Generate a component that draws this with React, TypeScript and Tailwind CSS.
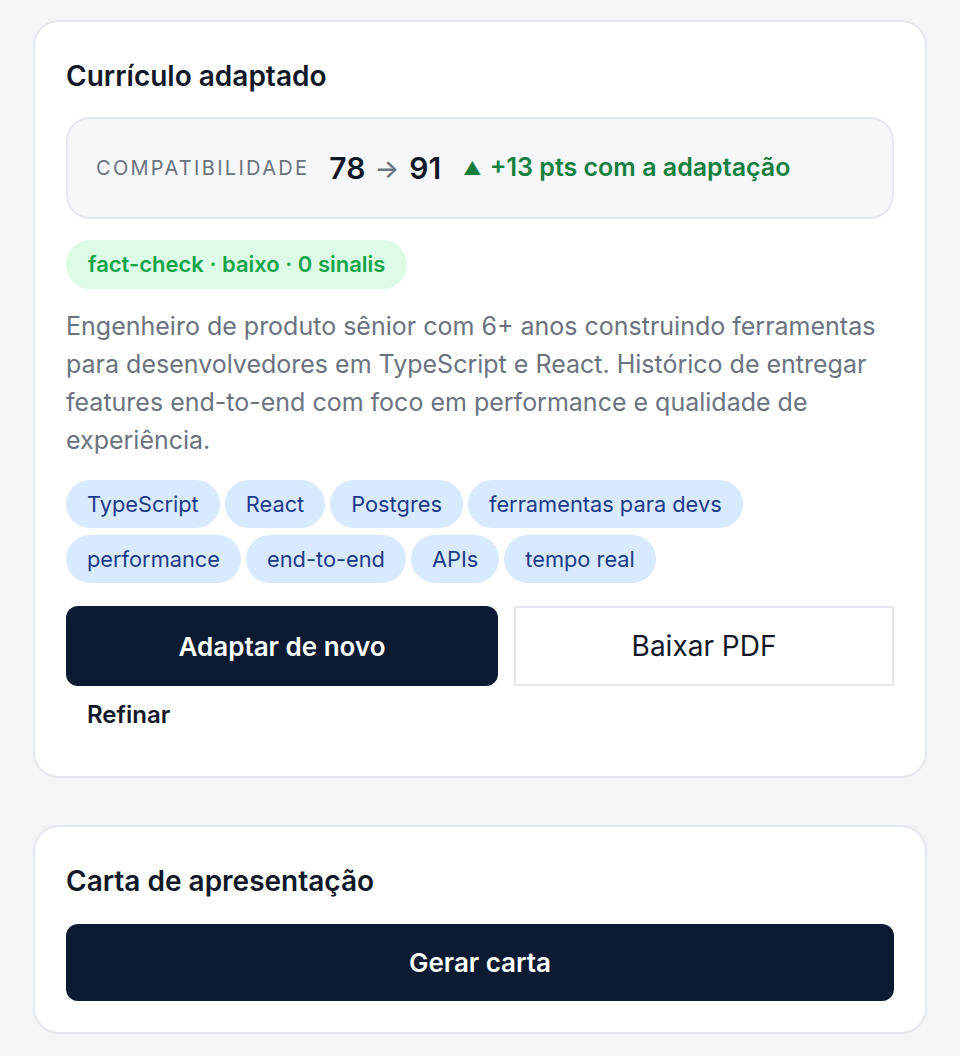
const tags = [
  'TypeScript',
  'React',
  'Postgres',
  'ferramentas para devs',
  'performance',
  'end-to-end',
  'APIs',
  'tempo real',
];

function Tag({ label }: { label: string }) {
  return (
    <span className="flex h-[48px] items-center rounded-full bg-[#d8eafd] px-[21px] text-[21.8px] text-[#1e3a8a]">
      {label}
    </span>
  );
}

export default function App() {
  return (
    <div
      className="flex min-h-[1056px] flex-col gap-[47px] bg-[#f4f5f9] px-[33px] pt-[20px] pb-[20px] text-[#111827]"
      style={{ fontFamily: 'Inter, "Noto Sans", sans-serif' }}
    >
      {/* Adapted resume */}
      <section className="flex flex-col rounded-[26px] border-2 border-[#e5e7ee] bg-white px-[31px] pt-[37px] pb-[45px]">
        <h2 className="text-[28px] font-semibold leading-[34px]">Currículo adaptado</h2>

        <div className="mt-[24px] flex h-[102px] items-center rounded-[24px] border-2 border-[#e5e7ee] bg-[#f6f7fb] px-[28px]">
          <span className="text-[20px] tracking-[0.115em] text-[#6b7280]">COMPATIBILIDADE</span>
          <span className="ml-[20px] text-[30px] font-semibold">78</span>
          <span className="ml-[9px] text-[26px] font-medium text-[#6b7280]">→</span>
          <span className="ml-[10px] text-[30px] font-semibold">91</span>
          <span className="ml-[22px] flex items-center gap-[8px] text-[25px] font-semibold text-[#15803d]">
            <span className="text-[18px]">▲</span>
            +13 pts com a adaptação
          </span>
        </div>

        <div className="mt-[21px] flex">
          <span className="flex h-[49px] items-center rounded-full bg-[#dcfce7] px-[22px] text-[22px] font-semibold text-[#16a34a]">
            fact-check · baixo · 0 sinalis
          </span>
        </div>

        <p className="mt-[18px] text-[25px] leading-[38px] text-[#6b7280]">
          Engenheiro de produto sênior com 6+ anos construindo ferramentas para desenvolvedores em
          TypeScript e React. Histórico de entregar features end-to-end com foco em performance e
          qualidade de experiência.
        </p>

        <div className="mt-[21px] flex flex-wrap gap-x-[5px] gap-y-[7px]">
          {tags.map((t) => (
            <Tag key={t} label={t} />
          ))}
        </div>

        <div className="mt-[23px] grid grid-cols-[432px_1fr] gap-[16px]">
          <button className="h-[80px] rounded-[12px] bg-[#0c1b32] text-[26px] font-semibold text-white">
            Adaptar de novo
          </button>
          <button className="h-[80px] border-2 border-[#e5e7ee] bg-white text-[28px] text-[#111827]">
            Baixar PDF
          </button>
        </div>

        <div className="mt-[13px] flex">
          <button className="px-[21px] text-[24px] font-semibold leading-[32px]">Refinar</button>
        </div>
      </section>

      {/* Cover letter */}
      <section className="flex flex-col rounded-[26px] border-2 border-[#e5e7ee] bg-white px-[31px] pt-[37px] pb-[31px]">
        <h2 className="text-[28px] font-semibold leading-[34px]">Carta de apresentação</h2>
        <button className="mt-[26px] h-[77px] rounded-[12px] bg-[#0c1b32] text-[26px] font-semibold text-white">
          Gerar carta
        </button>
      </section>
    </div>
  );
}
